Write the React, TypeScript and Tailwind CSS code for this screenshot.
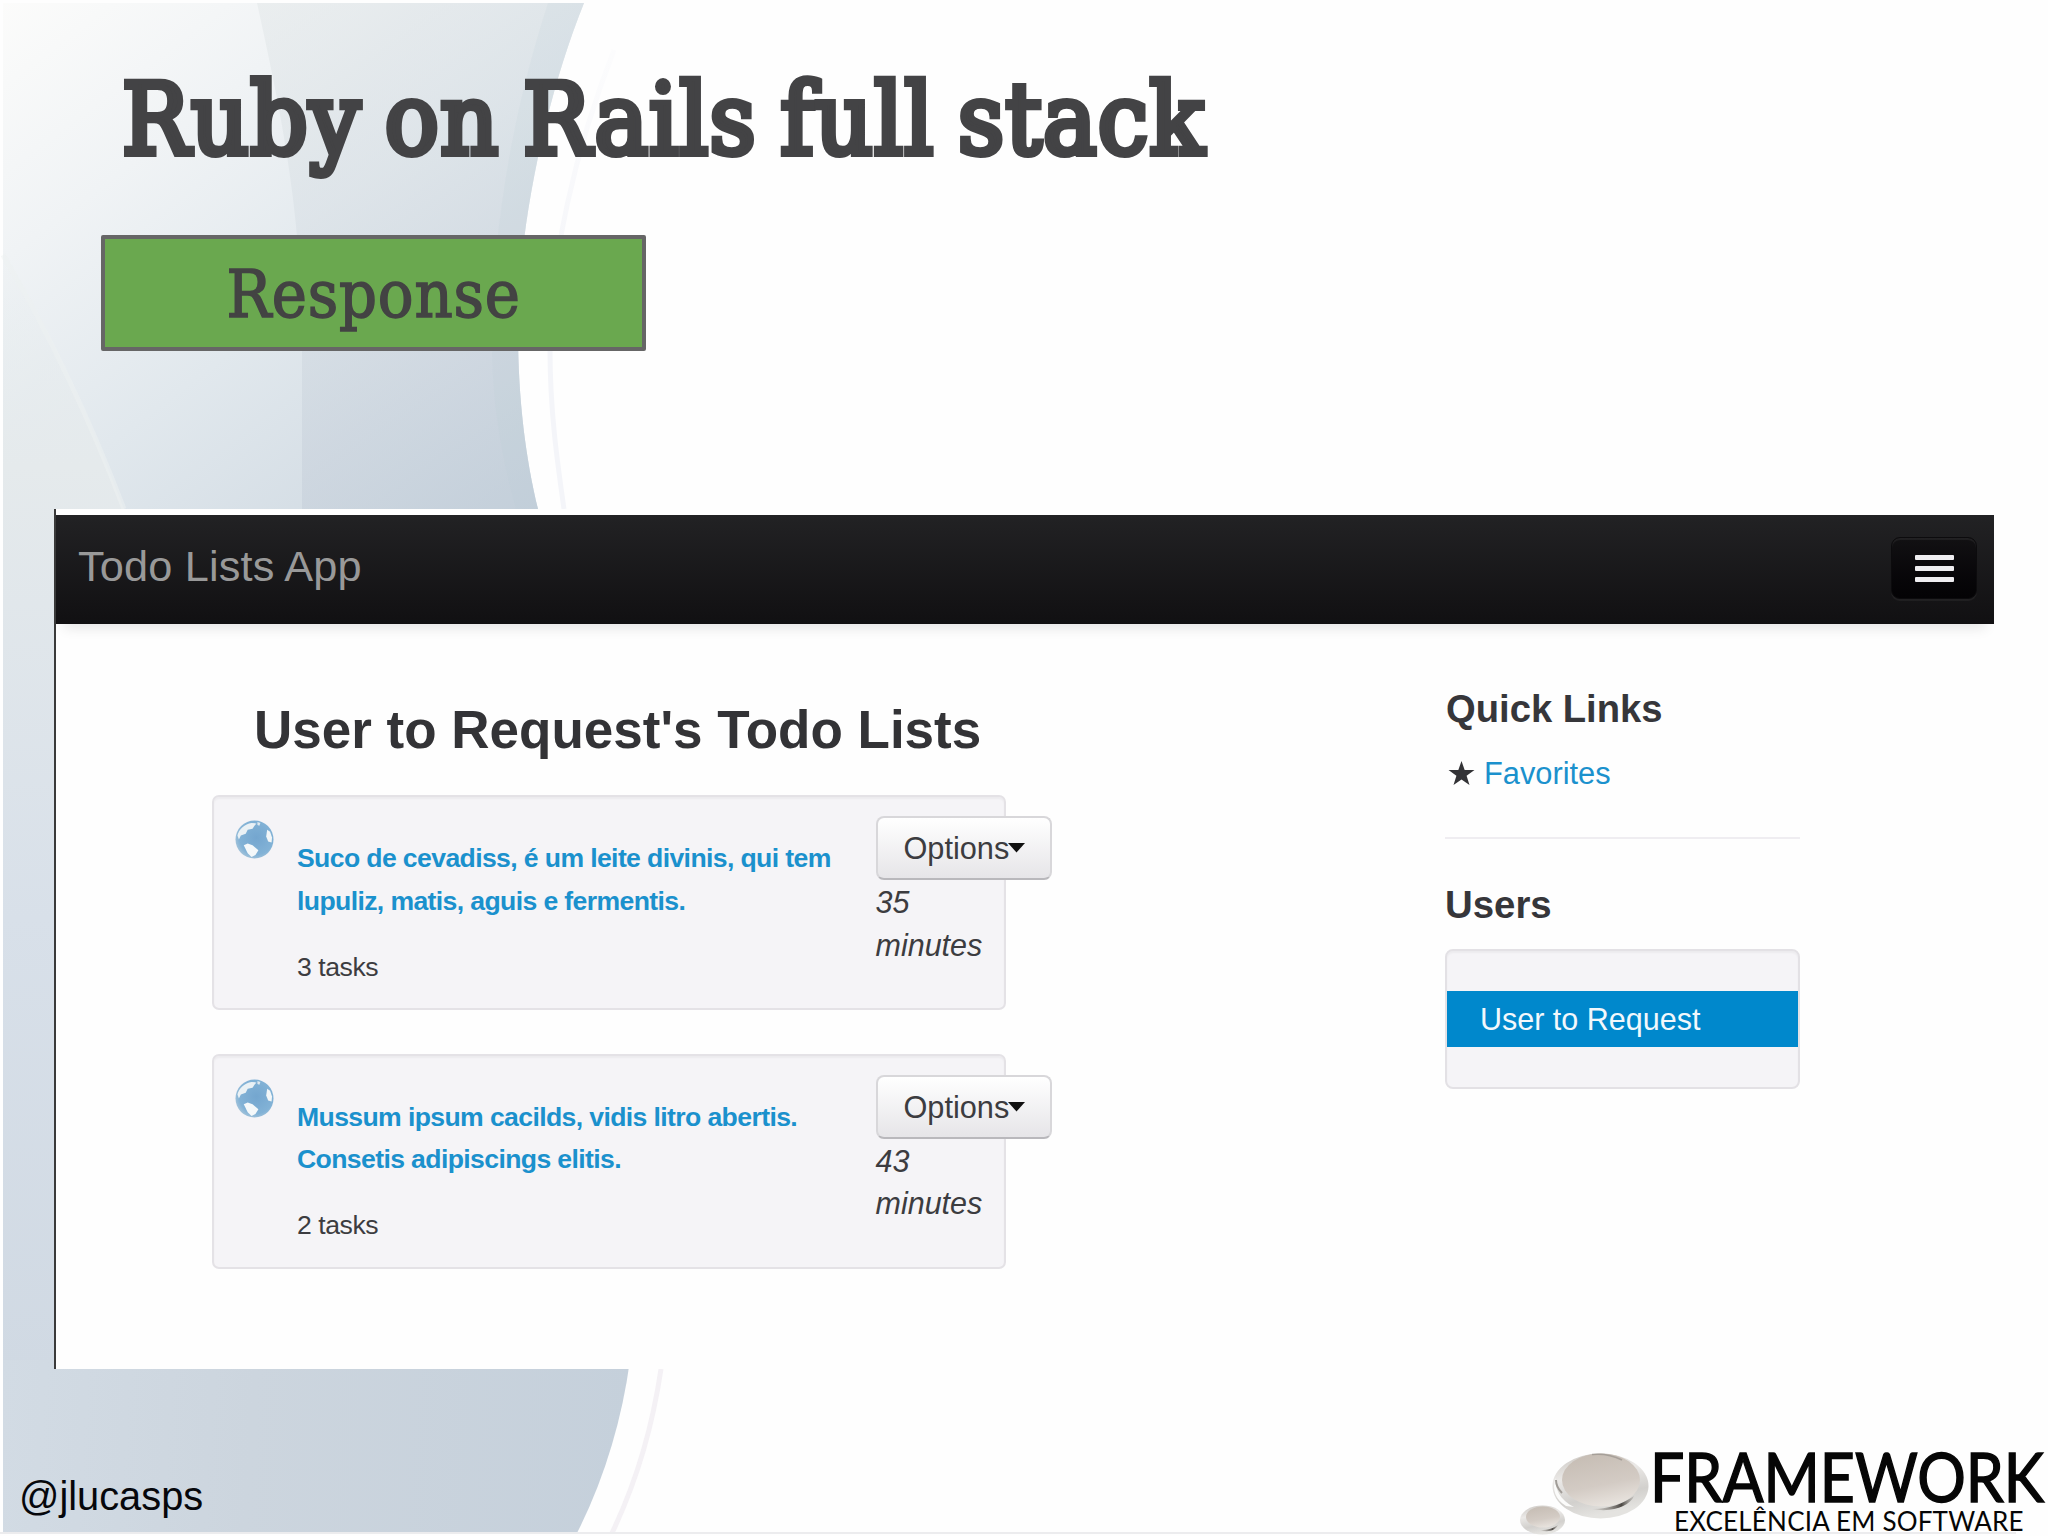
type Todo = { title: string[]; tasks: string; age: string[] };

const TODOS: Todo[] = [
  {
    title: ["Suco de cevadiss, é um leite divinis, qui tem", "lupuliz, matis, aguis e fermentis."],
    tasks: "3 tasks",
    age: ["35", "minutes"],
  },
  {
    title: ["Mussum ipsum cacilds, vidis litro abertis.", "Consetis adipiscings elitis."],
    tasks: "2 tasks",
    age: ["43", "minutes"],
  },
];

function Backdrop() {
  return (
    <svg className="absolute inset-0" width="2048" height="1536" viewBox="0 0 2048 1536" aria-hidden="true">
      <defs>
        <linearGradient id="sky" gradientUnits="userSpaceOnUse" x1="0" y1="0" x2="420" y2="560">
          <stop offset="0" stopColor="#fcfcfb" />
          <stop offset="0.3" stopColor="#f0f3f5" />
          <stop offset="0.6" stopColor="#e1e8ed" />
          <stop offset="1" stopColor="#ced8e1" />
        </linearGradient>
        <linearGradient id="band" gradientUnits="userSpaceOnUse" x1="250" y1="0" x2="560" y2="520">
          <stop offset="0" stopColor="#e6eaeb" />
          <stop offset="0.35" stopColor="#dae1e6" />
          <stop offset="0.7" stopColor="#cad3dd" />
          <stop offset="1" stopColor="#bdcad6" />
        </linearGradient>
        <linearGradient id="edge" gradientUnits="userSpaceOnUse" x1="0" y1="240" x2="0" y2="1369">
          <stop offset="0" stopColor="#e9eef0" stopOpacity="0" />
          <stop offset="0.2" stopColor="#e5eaec" />
          <stop offset="0.6" stopColor="#d8e0e9" />
          <stop offset="1" stopColor="#d0d9e3" />
        </linearGradient>
        <linearGradient id="glint" gradientUnits="userSpaceOnUse" x1="0" y1="50" x2="0" y2="500">
          <stop offset="0" stopColor="#f4f5f9" stopOpacity="0.2" />
          <stop offset="0.6" stopColor="#f4f5f9" />
          <stop offset="1" stopColor="#f4f5f9" />
        </linearGradient>
        <linearGradient id="floor" gradientUnits="userSpaceOnUse" x1="0" y1="1400" x2="630" y2="1440">
          <stop offset="0" stopColor="#d2dbe4" />
          <stop offset="0.4" stopColor="#ccd5de" />
          <stop offset="1" stopColor="#c5d0db" />
        </linearGradient>
      </defs>
      <rect width="2048" height="1536" fill="#fefefe" />
      <path d="M3 3H584C545 100 518 230 518 330C518 400 526 460 538 509V520H3Z" fill="url(#sky)" />
      <path d="M257 3H584C545 100 518 230 518 330C518 400 526 460 538 509V520H302V350C302 220 285 130 257 3Z" fill="url(#band)" opacity="0.65" />
      <path d="M548 3C510 120 492 240 492 340C492 410 503 460 516 509H538C526 460 518 400 518 330C518 230 545 100 584 3Z" fill="#b9cbd6" opacity="0.14" />
      <path d="M3 250C50 330 90 420 124 509V520H3Z" fill="url(#edge)" />
      <path d="M3 255C50 335 90 420 124 509" fill="none" stroke="#eef1f1" strokeWidth="5" opacity="0.5" />
      <path d="M614 50C575 150 550 260 550 350C550 410 557 460 564 509" fill="none" stroke="url(#glint)" strokeWidth="5" />
      <rect x="3" y="509" width="60" height="862" fill="url(#edge)" />
      <path d="M3 1360H630C622 1420 604 1480 577 1533H3Z" fill="url(#floor)" />
      <path d="M661 1369C652 1430 635 1485 612 1533" fill="none" stroke="#f4f1f5" strokeWidth="5" />
      <rect x="0" y="1532" width="2016" height="2" fill="#ececee" />
    </svg>
  );
}

function Globe() {
  return (
    <svg width="39" height="39" viewBox="0 0 40 40" aria-hidden="true">
      <defs>
        <radialGradient id="globe" cx="0.55" cy="0.45" r="0.6">
          <stop offset="0" stopColor="#74a6cf" />
          <stop offset="0.75" stopColor="#82b2d6" />
          <stop offset="1" stopColor="#a9c6db" />
        </radialGradient>
      </defs>
      <circle cx="20" cy="20" r="19.500" fill="url(#globe)" />
      <path d="M2.500 16C4 9 10 4 17 3L22 3.500L20 6L18 9L13 10L11 14L6 16L4 20Z" fill="#eaf1f5" />
      <path d="M23 2L26 3L25 6L23 5Z" fill="#dfe9f0" />
      <path d="M33 10L36 12L38 18L37.500 23L34 22L32 17Z" fill="#f2f6f8" />
      <path d="M9 26L13 24L18 26L24 31L21 36L17 38L13 34Z" fill="#f4f8fa" />
    </svg>
  );
}

function TodoCard({ todo }: { todo: Todo }) {
  return (
    <article className="flex h-[215px] w-[794px] rounded-[7px] border-2 border-[#e4e2e6] bg-[#f5f4f7] pl-[21px] shadow-[inset_0_2px_2px_rgba(0,0,0,0.04)]">
      <div className="w-[62px] shrink-0 pt-[23px]">
        <Globe />
      </div>
      <div className="w-[578.5px] shrink-0 pt-[40px] text-[26.6px] leading-[42.7px]">
        <h2 className="font-bold tracking-[-0.62px] whitespace-nowrap text-[#1b91cd]">
          {todo.title.map((line) => (
            <span key={line} className="block">{line}</span>
          ))}
        </h2>
        <p className="mt-[23.5px] tracking-[-0.45px] text-[#3c3c40]">{todo.tasks}</p>
      </div>
      <div className="w-[177px] shrink-0 pt-[19px]">
        <button className="flex h-16 w-[176px] items-center rounded-[8px] border-2 border-[#d8d7da] border-b-[#b9b8bc] bg-linear-to-b from-white to-[#e6e5e8] pl-[26px] text-[30.7px] leading-[60px] text-[#3c3c40]">
          <span className="-mr-0.5 pt-0.5">Options</span>
          <svg className="ml-px" width="17" height="10" viewBox="0 0 17 10" aria-hidden="true">
            <path d="M0 0H17L8.500 9.500Z" fill="#111" />
          </svg>
        </button>
        <p className="pt-px text-[30.5px] leading-[42.5px] text-[#3c3c40] italic">
          {todo.age.map((line) => (
            <span key={line} className="block">{line}</span>
          ))}
        </p>
      </div>
    </article>
  );
}

function Sidebar() {
  return (
    <aside className="w-[355px] pt-[63px] text-[#36363a]">
      <h2 className="pl-px text-[38.2px] leading-[44px] font-bold">Quick Links</h2>
      <div className="mt-[22px] flex items-center pl-[3px] leading-[42px]">
        <svg className="-mt-0.5" width="27" height="25" viewBox="0 0 28 26" aria-hidden="true">
          <path d="M14 0L17.300 9.400H27.500L19.300 15.400L22.300 25L14 19.200L5.700 25L8.700 15.400L0.500 9.400H10.700Z" fill="#333336" />
        </svg>
        <a className="ml-[9px] text-[30.8px] text-[#1b91cd]">Favorites</a>
      </div>
      <hr className="mt-[42px] border-t-2 border-[#efedf1]" />
      <h2 className="mt-[44px] text-[38.4px] leading-[44px] font-bold">Users</h2>
      <div className="mt-[22px] h-[140px] rounded-[8px] border-2 border-[#e3e1e5] bg-[#f5f4f7] pt-10 shadow-[inset_0_2px_2px_rgba(0,0,0,0.04)]">
        <a className="block h-14 bg-[#0088cc] pl-[33px] text-[30.5px] leading-[56px] text-[#f2f8fc]">User to Request</a>
      </div>
    </aside>
  );
}

function AppWindow() {
  return (
    <section className="ml-[54px] h-[860px] w-[1940px] border-l-2 border-[#3a3a3a] bg-[#fefefe] pt-1.5">
      <header className="flex h-[109px] items-start justify-between bg-linear-to-b from-[#222224] to-[#111012] shadow-[0_12px_12px_-8px_rgba(0,0,0,0.1)]">
        <span className="pl-[22px] text-[43.3px] leading-[103px] tracking-[0.15px] text-[#999999]">Todo Lists App</span>
        <button className="mt-[22px] mr-[17px] flex h-[62px] w-[86px] flex-col items-center justify-center gap-[6px] rounded-[9px] border border-[#0c0b0d] bg-linear-to-b from-[#121113] to-[#040305] shadow-[inset_0_2px_1px_rgba(255,255,255,0.07),0_2px_1px_rgba(255,255,255,0.06)]">
          {[0, 1, 2].map((bar) => (
            <span key={bar} className="h-[5px] w-[39px] rounded-[1px] bg-[#efeef1]" />
          ))}
        </button>
      </header>
      <div className="flex">
        <main className="ml-[156px] w-[1233px] pt-[76px]">
          <h1 className="pl-[42px] text-[53px] leading-[60px] font-bold text-[#333336]">User to Request's Todo Lists</h1>
          <div className="mt-[35px] flex flex-col gap-[43.5px]">
            {TODOS.map((todo) => (
              <TodoCard key={todo.tasks} todo={todo} />
            ))}
          </div>
        </main>
        <Sidebar />
      </div>
    </section>
  );
}

function FrameworkLogo() {
  return (
    <div className="flex items-end">
      <svg width="134" height="92" viewBox="1518 1444 134 92" aria-hidden="true">
        <defs>
          <linearGradient id="rim" x1="0" y1="0" x2="0.3" y2="1">
            <stop offset="0" stopColor="#c9c5c0" />
            <stop offset="0.4" stopColor="#ebe9e7" />
            <stop offset="0.75" stopColor="#d2d0cd" />
            <stop offset="1" stopColor="#e4e3e0" />
          </linearGradient>
          <linearGradient id="pebble" x1="0.3" y1="0" x2="0.6" y2="1">
            <stop offset="0" stopColor="#c6bdb4" />
            <stop offset="0.6" stopColor="#d3cbc4" />
            <stop offset="1" stopColor="#e9e4df" />
          </linearGradient>
          <linearGradient id="shade" x1="0" y1="0" x2="1" y2="0">
            <stop offset="0" stopColor="#aaa69f" stopOpacity="0.2" />
            <stop offset="0.7" stopColor="#4c4844" />
            <stop offset="1" stopColor="#8d8984" stopOpacity="0.3" />
          </linearGradient>
        </defs>
        <ellipse cx="1600.500" cy="1486" rx="48" ry="32.500" fill="url(#rim)" />
        <path d="M1556 1478C1554 1488 1560 1500 1574 1507L1566 1506C1556 1500 1551 1489 1556 1478Z" fill="#fbfbfa" />
        <ellipse cx="1601" cy="1480" rx="39" ry="26.500" fill="url(#pebble)" />
        <path d="M1592 1509C1610 1509 1624 1503 1634 1496C1630 1506 1612 1513 1592 1509Z" fill="url(#shade)" />
        <path d="M1556 1480C1556 1486 1559 1490 1562 1493" fill="none" stroke="#a09c97" strokeWidth="2" />
        <path d="M1592 1454.500C1602 1453.500 1614 1456 1622 1460" fill="none" stroke="#8f8b86" strokeWidth="1.500" opacity="0.6" />
        <ellipse cx="1542.500" cy="1520" rx="22.500" ry="14.500" fill="url(#rim)" />
        <ellipse cx="1543" cy="1517" rx="17" ry="10.500" fill="url(#pebble)" />
        <path d="M1540 1530C1548 1530 1554 1528 1558 1525C1556 1530 1548 1533 1540 1530Z" fill="url(#shade)" />
      </svg>
      <div className="w-[396px] font-['Lato',sans-serif] whitespace-nowrap text-[#060606]">
        <div className="-ml-[2px] origin-left scale-x-[0.893] text-[68px] leading-[60px] [-webkit-text-stroke:1.5px_#060606]">FRAMEWORK</div>
        <div className="mt-px pl-[22px] text-[26px] leading-[29px] tracking-[0.2px]">EXCELÊNCIA EM SOFTWARE</div>
      </div>
    </div>
  );
}

export default function App() {
  return (
    <div className="relative h-[1536px] w-[2048px] overflow-hidden font-['Liberation_Sans',Arial,sans-serif]">
      <Backdrop />
      <div className="relative flex h-full flex-col">
        <h1 className="h-[235px] pt-[65px] pl-[122px] font-['DejaVu_Serif_Condensed','DejaVu_Serif',serif] text-[100px] leading-[110px] tracking-[1.3px] whitespace-nowrap text-[#434345] [word-spacing:-6.3px] [-webkit-text-stroke:6px_#434345]">
          Ruby on Rails full stack
        </h1>
        <div className="mb-[158px] ml-[101px] flex h-[116px] w-[545px] items-center justify-center rounded-[2px] border-4 border-[#666666] bg-[#6aa84f] pt-1 font-['DejaVu_Serif_Condensed','DejaVu_Serif',serif] text-[66px] leading-[100px] tracking-[0.8px] text-[#434343] [-webkit-text-stroke:1.5px_#434343]">
          Response
        </div>
        <AppWindow />
        <footer className="flex flex-1 items-end justify-between">
          <span className="pb-[16px] pl-[19px] text-[39.8px] leading-[48px] text-[#06070b]">@jlucasps</span>
          <FrameworkLogo />
        </footer>
      </div>
    </div>
  );
}
